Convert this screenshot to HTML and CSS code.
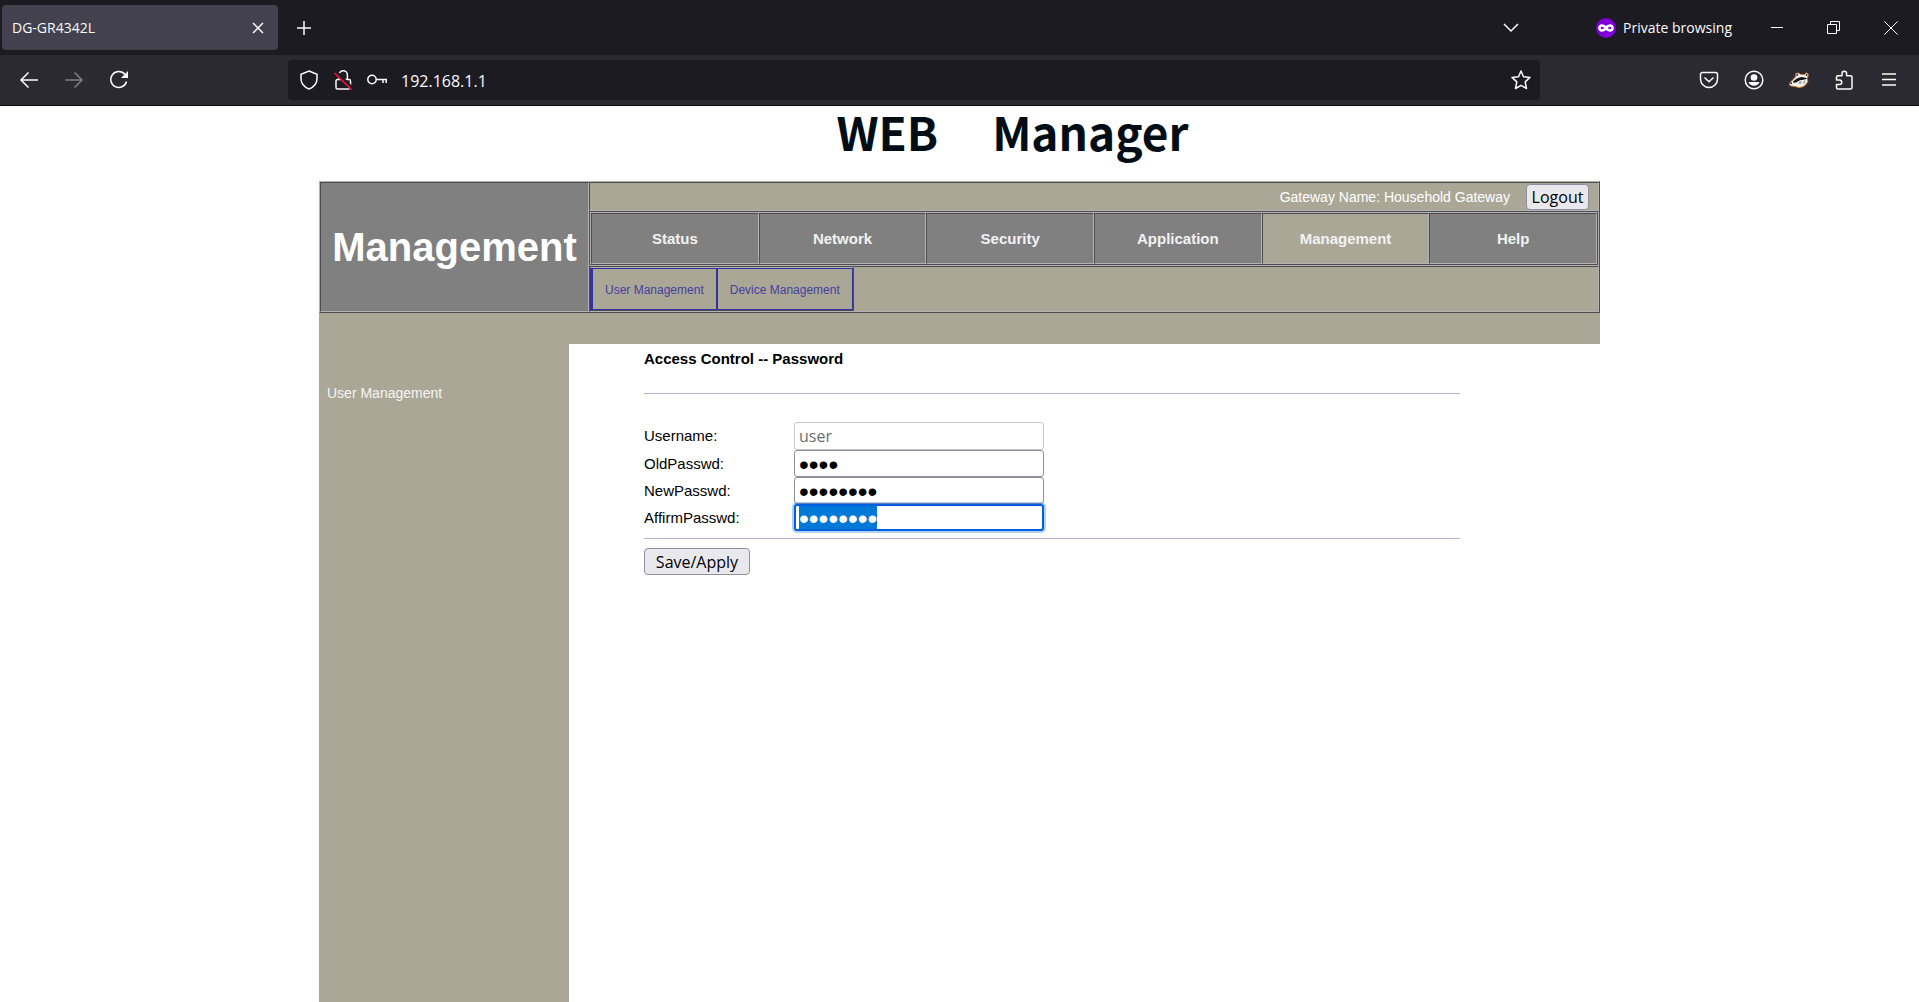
FILE: index.html
```html
<!DOCTYPE html>
<html lang="en">
<head>
<meta charset="utf-8">
<title>DG-GR4342L</title>
<link rel="stylesheet" href="styles.css">
</head>
<body>
<header class="browser">
  <div class="tabstrip">
    <div class="tab">
      <span class="tab-title">DG-GR4342L</span>
      <button class="icon-btn" aria-label="Close tab"><svg width="12" height="12" viewBox="0 0 12 12"><path d="M1 1l10 10M11 1L1 11"/></svg></button>
    </div>
    <button class="icon-btn new-tab" aria-label="New tab"><svg width="16" height="16" viewBox="0 0 16 16"><path d="M8 1v14M1 8h14"/></svg></button>
    <div class="window-tools">
      <button class="icon-btn tab-list" aria-label="List all tabs"><svg width="16" height="10" viewBox="0 0 16 10"><path d="M1 1l7 7 7-7"/></svg></button>
      <div class="private">
        <svg width="20" height="20" viewBox="0 0 20 20"><circle cx="10" cy="10" r="10" fill="#8000d7" stroke="none"/><path d="M10 10C8 7 3.500 6.500 3.500 10S8 13 10 10s6.500-3.500 6.500 0S12 13 10 10z" stroke="#fff" stroke-width="2.600"/></svg>
        <span>Private browsing</span>
      </div>
      <button class="icon-btn window-btn" aria-label="Minimize"><svg width="12" height="12" viewBox="0 0 12 12"><path d="M0 5.500h12" stroke-width="1"/></svg></button>
      <button class="icon-btn window-btn" aria-label="Restore"><svg width="13" height="13" viewBox="0 0 13 13"><path d="M.5 3.500h9v9h-9zM3.500 3.500v-3h9v9h-3" stroke-width="1"/></svg></button>
      <button class="icon-btn window-btn" aria-label="Close"><svg width="14" height="14" viewBox="0 0 14 14"><path d="M.5.5l13 13M13.500.5l-13 13" stroke-width="1"/></svg></button>
    </div>
  </div>
  <div class="toolbar">
    <div class="history">
      <button class="icon-btn" aria-label="Back"><svg width="20" height="20" viewBox="0 0 20 20"><path d="M19 10H2M9.500 2.500L2 10l7.500 7.500"/></svg></button>
      <button class="icon-btn dim" aria-label="Forward"><svg width="20" height="20" viewBox="0 0 20 20"><path d="M1 10h17M10.500 2.500L18 10l-7.500 7.500"/></svg></button>
      <button class="icon-btn" aria-label="Reload"><svg width="20" height="20" viewBox="0 0 20 20"><path d="M17.500 11.500A8 8 0 1 1 16 4.500"/><path d="M19 1v7h-7z" fill="#fbfbfe" stroke="none"/></svg></button>
    </div>
    <div class="urlbar">
      <button class="icon-btn" aria-label="Tracking protection"><svg width="20" height="20" viewBox="0 0 20 20"><path d="M10 1l8 3.200v4.300c0 4.500-3 8.500-8 10.500-5-2-8-6-8-10.500V4.200z"/></svg></button>
      <button class="icon-btn" aria-label="Connection not secure"><svg width="20" height="20" viewBox="0 0 20 20"><path d="M6 9.500V5a4.200 4.200 0 0 1 8.400 0v4.500M4.500 9.500h11.500a1.500 1.500 0 0 1 1.500 1.500v6.500A1.500 1.500 0 0 1 16 19H4.500A1.500 1.500 0 0 1 3 17.500V11a1.500 1.500 0 0 1 1.500-1.500z"/><path d="M3 2.500l16 16" stroke="#1c1b22" stroke-width="4"/><path d="M1.500 3l17 16.500" stroke="#f0103c" stroke-width="1.700"/></svg></button>
      <button class="icon-btn" aria-label="Saved logins"><svg width="20" height="20" viewBox="0 0 20 20"><circle cx="5" cy="9.500" r="4.200"/><path d="M9.500 9.500h10.500M16 9.500v3.500M19.200 9.500v3.500"/></svg></button>
      <input class="url" type="text" value="192.168.1.1" aria-label="Address">
      <button class="icon-btn" aria-label="Bookmark this page"><svg width="20" height="20" viewBox="0 0 20 20"><path stroke-linejoin="round" d="M10 1l2.500 5.800 6.500.6-4.800 4.500 1.300 6.600L10 15.300 4.500 18.500l1.300-6.600L1 7.400l6.500-.6z"/></svg></button>
    </div>
    <div class="extensions">
      <button class="icon-btn" aria-label="Save to Pocket"><svg width="20" height="20" viewBox="0 0 20 20"><path d="M3.500 2.500h13A2 2 0 0 1 18.500 4.500V9a8.500 8.500 0 0 1-17 0V4.500a2 2 0 0 1 2-2zM5.500 7.500L10 11.800l4.500-4.300"/></svg></button>
      <button class="icon-btn" aria-label="Account"><svg width="20" height="20" viewBox="0 0 20 20"><circle cx="10" cy="10" r="8.800"/><circle cx="10" cy="7.500" r="3.300" fill="#fbfbfe" stroke="none"/><path d="M4.500 12h11c-.5 2.300-3 3.800-5.500 3.800S5 14.300 4.500 12z" fill="#fbfbfe" stroke="none"/></svg></button>
      <button class="icon-btn" aria-label="Privacy Badger"><svg width="20" height="20" viewBox="0 0 20 20"><path d="M.6 13.200L3.500 10 6.800 6.800 6.700 3.600 9.200 3l2 1.300 4.300.4 1.700-1.900 2 1.200-.3 3-.9 1.500.9 2.800-1.900 3.200-3 2.200-4 .9-3.500-1-4.300-.6-1.800-1z" fill="#f2f2ee" stroke="#d77a36" stroke-width="1"/><path d="M4 11.500L8.200 8.300 12.500 7l4 .8 1.500 1-3.500 1-3.500.5-4 2.200-2.600.2zM1 13l1.600-.8.6 1.400-1.400.6zM7.500 4l1.300.2.3 1.300-1.500.5zM17 4l1.300.3-.2 1.700-1.400-.6z" fill="#151515" stroke="none"/><path d="M9 12.500l3-1.500 1 1.500-2 2zM14.500 11l2-.8-.7 3-1.800 1z" fill="#a5a5a0" stroke="none"/></svg></button>
      <button class="icon-btn" aria-label="Extensions"><svg width="20" height="20" viewBox="0 0 20 20"><path stroke-linejoin="round" d="M2.500 10V7.200a1.500 1.500 0 0 1 1.500-1.500h4V3.500a2.300 2.300 0 0 1 4.600 0v2.200h3.900A1.500 1.500 0 0 1 18 7.200v10.300a1.500 1.500 0 0 1-1.500 1.500H4a1.500 1.500 0 0 1-1.500-1.500V14.500h3a2.200 2.200 0 0 0 0-4.500z"/></svg></button>
      <button class="icon-btn" aria-label="Menu"><svg width="20" height="20" viewBox="0 0 20 20"><path d="M3 4h14M3 9.500h14M3 15h14"/></svg></button>
    </div>
  </div>
</header>

<div class="page">
  <div class="logo"><span>WEB</span><span>Manager</span></div>
  <div class="masthead">
    <h1 class="section-name">Management</h1>
    <div class="masthead-rows">
      <div class="gateway">
        <span>Gateway Name: Household Gateway</span>
        <button class="btn logout">Logout</button>
      </div>
      <nav class="nav-row">
        <ul class="nav">
          <li><a href="#">Status</a></li>
          <li><a href="#">Network</a></li>
          <li><a href="#">Security</a></li>
          <li><a href="#">Application</a></li>
          <li class="active"><a href="#">Management</a></li>
          <li><a href="#">Help</a></li>
        </ul>
      </nav>
      <nav class="subnav-row">
        <ul class="subnav">
          <li><a href="#">User Management</a></li>
          <li><a href="#">Device Management</a></li>
        </ul>
      </nav>
    </div>
  </div>
  <div class="band"></div>
  <div class="columns">
    <aside class="sidebar"><a href="#">User Management</a></aside>
    <main class="content">
      <h2>Access Control -- Password</h2>
      <hr>
      <form>
        <div class="fields">
          <label for="username">Username:</label>
          <input class="field first" id="username" type="text" value="user" disabled>
          <label for="old">OldPasswd:</label>
          <input class="field secret" id="old" type="password" value="user">
          <label for="new">NewPasswd:</label>
          <input class="field secret" id="new" type="password" value="password">
          <label for="affirm">AffirmPasswd:</label>
          <input class="field secret" id="affirm" type="password" value="password" autofocus>
        </div>
        <hr class="form-end">
        <button class="btn save" type="button">Save/Apply</button>
      </form>
    </main>
  </div>
</div>
<script src="script.js"></script>
</body>
</html>
```
FILE: styles.css
```css
* { box-sizing: border-box; }

:root {
  --beige: #aba797;
  --grey: #808080;
  --light: #b3b1b2;
  --dark: #4b4b50;
  --ui: "Open Sans", "Noto Sans", sans-serif;
}

body {
  margin: 0;
  min-height: 100vh;
  display: flex;
  flex-direction: column;
  background: #fff;
  font-family: "Liberation Sans", Arial, sans-serif;
  font-size: 15px;
  line-height: 18px;
}

a { color: inherit; text-decoration: none; }
ul { list-style: none; margin: 0; padding: 0; }

/* Browser chrome */
.browser { color: #fbfbfe; font-family: var(--ui); font-size: 14px; }

.icon-btn {
  display: flex;
  align-items: center;
  justify-content: center;
  width: 20px;
  height: 20px;
  padding: 0;
  border: 0;
  background: none;
}

.browser svg {
  flex: none;
  fill: none;
  stroke: #fbfbfe;
  stroke-width: 1.5;
}

.dim { opacity: .4; }

.tabstrip {
  display: flex;
  align-items: center;
  height: 55px;
  padding-left: 2px;
  background: #1c1b22;
}

.tab {
  display: flex;
  align-items: center;
  justify-content: space-between;
  width: 276px;
  height: 45px;
  padding: 0 10px;
  border-radius: 4px;
  background: #42414d;
}

.new-tab { margin-left: 16px; }

.window-tools { display: flex; align-items: center; margin-left: auto; }
.tab-list { margin-right: 75px; }
.private { display: flex; align-items: center; gap: 7px; margin-right: 16px; }
.window-btn { width: 57px; }

.toolbar {
  display: flex;
  align-items: center;
  height: 51px;
  border-bottom: 1px solid #0c0c0d;
  background: #2b2a33;
}

.history { display: flex; gap: 25px; width: 288px; padding-left: 19px; }

.urlbar {
  flex: 1;
  display: flex;
  align-items: center;
  gap: 14px;
  height: 40px;
  padding: 0 9px 0 11px;
  border-radius: 4px;
  background: #1c1b22;
}

.url {
  flex: 1;
  min-width: 0;
  padding: 2px 0 0;
  border: 0;
  background: none;
  color: #fbfbfe;
  font: 16px/20px var(--ui);
}

.extensions { display: flex; gap: 25px; padding: 0 20px 0 159px; }

/* Router page */
.page {
  flex: 1;
  display: flex;
  flex-direction: column;
  width: 100%;
  max-width: 1281px;
  margin: 0 auto;
}

.logo {
  display: flex;
  justify-content: center;
  gap: 54px;
  height: 75px;
  padding-left: 106px;
  color: #020d15;
  font: 700 46px/50px "Noto Sans CJK SC", "Noto Sans", sans-serif;
}

.masthead {
  display: grid;
  grid-template-columns: 269px 1fr;
  border: 1px solid;
  border-color: var(--light) var(--dark) var(--dark) var(--light);
  background: var(--beige);
  color: #fff;
}

.section-name,
.gateway,
.nav-row,
.subnav-row,
.nav li {
  border: 1px solid;
  border-color: var(--dark) var(--light) var(--light) var(--dark);
}

.section-name {
  display: flex;
  align-items: center;
  justify-content: center;
  margin: 0;
  background: var(--grey);
  font-size: 40px;
  line-height: 46px;
}

.gateway {
  display: flex;
  align-items: center;
  justify-content: flex-end;
  gap: 16px;
  height: 29px;
  padding-right: 9px;
  font-size: 14px;
}

.btn {
  border: 1px solid #8f8f9d;
  border-radius: 4px;
  background: #e9e9ed;
  color: #000;
  font: 16px/20px var(--ui);
}

.logout { width: 63px; height: 26px; padding: 0; }

.nav {
  display: grid;
  grid-template-columns: repeat(6, 1fr);
  border: 1px solid;
  border-color: var(--light) var(--dark) var(--dark) var(--light);
  color: #f2f2f2;
  font-weight: 700;
}

.nav li { background: var(--grey); }
.nav .active { background: var(--beige); }
.nav a { display: block; padding: 16px 0 15px; text-align: center; }

.subnav {
  display: flex;
  width: max-content;
  border: 1px solid;
  border-color: var(--light) var(--dark) var(--dark) #333399;
  color: #4440a0;
  font-size: 12px;
}

.subnav li { border: 1px solid #333399; }
.subnav li:first-child { border-left-width: 2px; }
.subnav a { display: block; padding: 12px 12px 10px; }

.band { height: 31px; background: var(--beige); }

.columns { flex: 1; display: grid; grid-template-columns: 250px 1fr; }
.sidebar { padding: 40px 8px; background: var(--beige); color: #f5f5f5; font-size: 14px; }

.content { padding: 6px 140px 20px 75px; }
.content h2 { margin: 0; font-size: 15px; line-height: 18px; }

hr { height: 1px; margin: 25px 0 28px; border: 0; background: #b4b4d6; }
.form-end { margin: 7px 0 9px; }

.fields {
  display: grid;
  grid-template-columns: 150px 250px;
  align-items: center;
}

.field {
  width: 100%;
  height: 27px;
  padding: 0 4px;
  border: 1px solid #8f8f9d;
  border-radius: 3px;
  background: #fff;
  color: #000;
  font: 16px/20px var(--ui);
}

.field.first { height: 28px; }
.field:disabled { border-color: #c7c7ce; color: #6d6d6d; }
.secret { padding: 4px 4px 2px; font: 28px/20px "Liberation Sans", Arial, sans-serif; }

.secret:focus {
  position: relative;
  padding: 3px 3px 1px;
  border: 2px solid #0060df;
  outline: 0;
  box-shadow: 0 0 0 2px rgba(0, 96, 223, .3);
}

.field::selection { background: #0078d7; color: #fff; }

.save { width: 106px; height: 27px; padding: 0; }
```
FILE: script.js
```js
const affirm = document.getElementById('affirm');
affirm.focus();
affirm.select();
```
